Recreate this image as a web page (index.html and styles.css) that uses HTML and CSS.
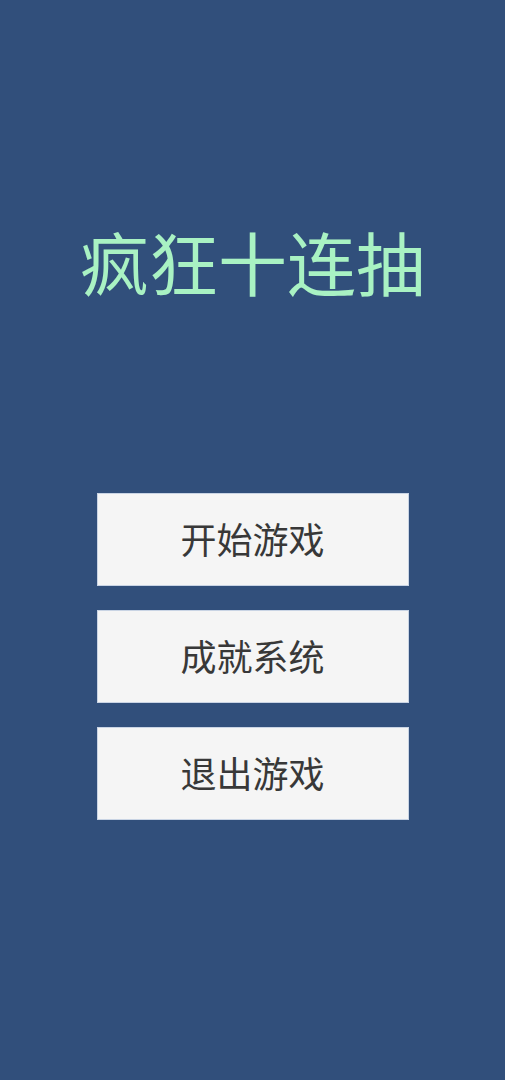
FILE: index.html
```html
<!doctype html>
<html>
<head>
<meta charset="utf-8">
<title>疯狂十连抽</title>
<link rel="stylesheet" href="styles.css">
</head>

<body>
	<div class="page">
		<h1 class="title">疯狂十连抽</h1>
		<div class="menu">
			<a href="javascript:;" class="btn">开始游戏</a>
			<a href="javascript:;" class="btn">成就系统</a>
			<a href="javascript:;" class="btn">退出游戏</a>
		</div>
	</div>
</body>
</html>
```

FILE: styles.css
```css
* { margin:0; padding:0; }
html, body { height:100%; }
body { background:#314f7b; font-family:"Noto Sans CJK SC", "Noto Sans", sans-serif; }
.page { display:flex; flex-direction:column; align-items:center; padding-top:221px; }
.title { height:80px; line-height:80px; font-size:69px; font-weight:normal; color:#a9f2c3; }
.menu { display:flex; flex-direction:column; gap:26px; margin-top:193px; }
.btn { display:block; width:310px; height:91px; line-height:89px; text-align:center; text-decoration:none; background:#f5f5f5; color:#383838; font-size:36px; box-shadow:0 0 0 1px #c9d4e4; }
```
